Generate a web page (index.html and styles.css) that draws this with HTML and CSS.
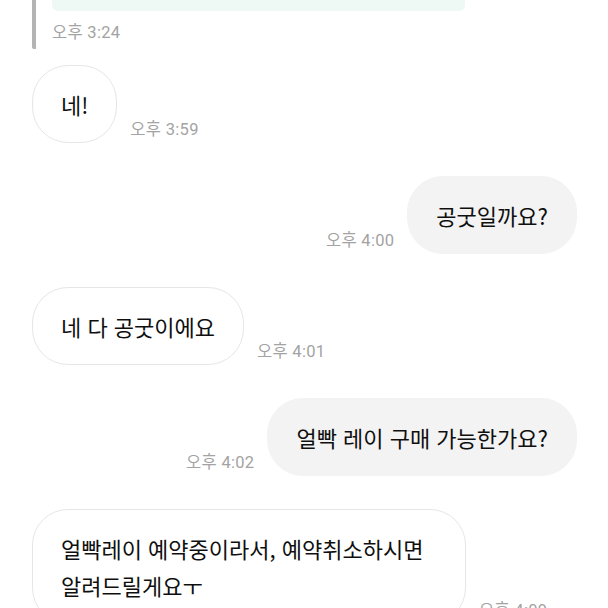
FILE: index.html
```html
<!DOCTYPE html>
<html lang="ko">
<head>
    <meta charset="UTF-8">
    <meta name="viewport" content="width=device-width, initial-scale=1.0">
    <title>채팅</title>
    <link rel="stylesheet" href="styles.css">
</head>
<body>
    <div class="chat">
        <div class="quote">
            <div class="quote-card"></div>
            <div class="time">오후 3:24</div>
        </div>

        <div class="row received">
            <div class="bubble">네!</div>
            <div class="time">오후 3:59</div>
        </div>

        <div class="row sent">
            <div class="time">오후 4:00</div>
            <div class="bubble">공굿일까요?</div>
        </div>

        <div class="row received">
            <div class="bubble">네 다 공굿이에요</div>
            <div class="time">오후 4:01</div>
        </div>

        <div class="row sent">
            <div class="time">오후 4:02</div>
            <div class="bubble">얼빡 레이 구매 가능한가요?</div>
        </div>

        <div class="row received">
            <div class="bubble">얼빡레이 예약중이라서, 예약취소하시면 알려드릴게요ㅜ</div>
            <div class="time">오후 4:09</div>
        </div>
    </div>
</body>
</html>
```

FILE: styles.css
```css
* {
    margin: 0;
    padding: 0;
    box-sizing: border-box;
}

body {
    background-color: #ffffff;
    color: #0f0f0f;
    font-family: "Noto Sans CJK KR", "Noto Sans", sans-serif;
    overflow: hidden;
}

.chat {
    display: flex;
    flex-direction: column;
    padding: 0 31px 0 32px;
}

.quote {
    border-left: 4px solid #b4b4b4;
    border-radius: 0 0 2px 2px;
    padding-left: 16px;
    height: 49px;
    margin-bottom: 16px;
}

.quote-card {
    width: 413px;
    height: 11px;
    background-color: #eef8f5;
    border-radius: 0 0 6px 6px;
    margin-bottom: 13px;
}

.time {
    font-family: Roboto, "Noto Sans CJK KR", sans-serif;
    font-size: 16.5px;
    line-height: 18px;
    letter-spacing: 0.3px;
    color: #a3a3a3;
    white-space: nowrap;
}

.row {
    display: flex;
    align-items: flex-end;
    gap: 13px;
    margin-bottom: 33px;
}

.row .time {
    padding-bottom: 4px;
}

.sent {
    justify-content: flex-end;
}

.bubble {
    font-size: 22px;
    line-height: 37px;
    padding: 19.5px 28px;
    border-radius: 36px;
    border: 1px solid #e6e6e6;
    background-color: #ffffff;
    max-width: 434px;
    word-break: keep-all;
}

.sent .bubble {
    background-color: #f3f3f3;
    border-color: #f3f3f3;
}
```
